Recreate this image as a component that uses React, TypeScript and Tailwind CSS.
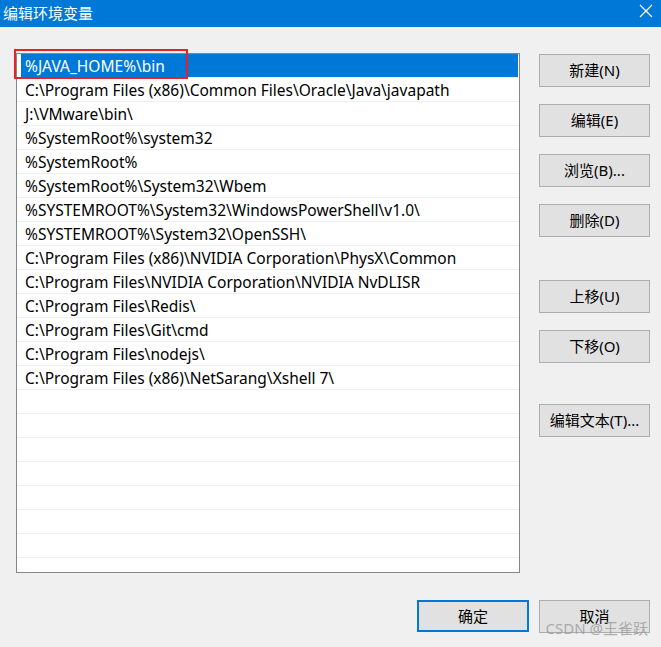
const paths = [
  "%JAVA_HOME%\\bin",
  "C:\\Program Files (x86)\\Common Files\\Oracle\\Java\\javapath",
  "J:\\VMware\\bin\\",
  "%SystemRoot%\\system32",
  "%SystemRoot%",
  "%SystemRoot%\\System32\\Wbem",
  "%SYSTEMROOT%\\System32\\WindowsPowerShell\\v1.0\\",
  "%SYSTEMROOT%\\System32\\OpenSSH\\",
  "C:\\Program Files (x86)\\NVIDIA Corporation\\PhysX\\Common",
  "C:\\Program Files\\NVIDIA Corporation\\NVIDIA NvDLISR",
  "C:\\Program Files\\Redis\\",
  "C:\\Program Files\\Git\\cmd",
  "C:\\Program Files\\nodejs\\",
  "C:\\Program Files (x86)\\NetSarang\\Xshell 7\\",
];

const font = { fontFamily: '"Noto Sans", "Noto Sans CJK SC", sans-serif' };

function SideButton({ label, className = "" }: { label: string; className?: string }) {
  return (
    <button
      className={`h-[33px] w-[111px] border border-[#adadad] bg-[#e1e1e1] text-[15px] text-black ${className}`}
    >
      {label}
    </button>
  );
}

export default function App() {
  const rows = [...paths, ...Array(8).fill("")];
  return (
    <div className="relative h-[647px] w-[661px] overflow-hidden bg-[#f0f0f0]" style={font}>
      {/* title bar */}
      <div className="flex h-[27px] items-center justify-between bg-[#0078d7] pl-[3px] pr-[8px] text-white">
        <span className="text-[15px] leading-none">编辑环境变量</span>
        <svg width="14" height="14" viewBox="0 0 14 14" className="mb-[6px]">
          <path d="M1 1L13 13M13 1L1 13" stroke="white" strokeWidth="1.2" />
        </svg>
      </div>

      <div className="flex pl-[16px] pt-[26px]">
        {/* list */}
        <div className="h-[520px] w-[504px] overflow-hidden border border-[#828790] bg-white">
          {rows.map((p, i) => (
            <div key={i} className="h-[24px] border-b border-[#f0f0f0] pl-[1px] pr-[1px]">
              {i === 0 ? (
                <div className="ml-[3px] flex h-[23px] items-center bg-[#0078d7] pl-[4px] pt-[2px] text-[15.5px] text-white">
                  {p}
                </div>
              ) : (
                <div className="flex h-[23px] items-center pl-[7px] pt-[2px] text-[15.5px] text-black">{p}</div>
              )}
            </div>
          ))}
        </div>

        {/* side buttons */}
        <div className="ml-[19px] flex flex-col pt-[1px]">
          <SideButton label="新建(N)" />
          <SideButton label="编辑(E)" className="mt-[17px]" />
          <SideButton label="浏览(B)..." className="mt-[17px]" />
          <SideButton label="删除(D)" className="mt-[17px]" />
          <SideButton label="上移(U)" className="mt-[43px]" />
          <SideButton label="下移(O)" className="mt-[17px]" />
          <SideButton label="编辑文本(T)..." className="mt-[41px]" />
        </div>
      </div>

      {/* bottom buttons */}
      <div className="flex justify-end gap-[10px] pr-[11px] pt-[27px]">
        <button className="h-[32px] w-[112px] border-2 border-[#0078d7] bg-[#e1e1e1] text-[15px] text-black">
          确定
        </button>
        <button className="h-[33px] w-[111px] border border-[#adadad] bg-[#e1e1e1] text-[15px] text-black">
          取消
        </button>
      </div>

      {/* red highlight annotation */}
      <div className="absolute left-[14px] top-[49px] h-[30px] w-[174px] border-2 border-[#e8202a]" />

      <div className="absolute bottom-[8px] right-[13px] text-[15px] text-[#9a9a9a]/80">CSDN @王雀跃</div>
    </div>
  );
}
